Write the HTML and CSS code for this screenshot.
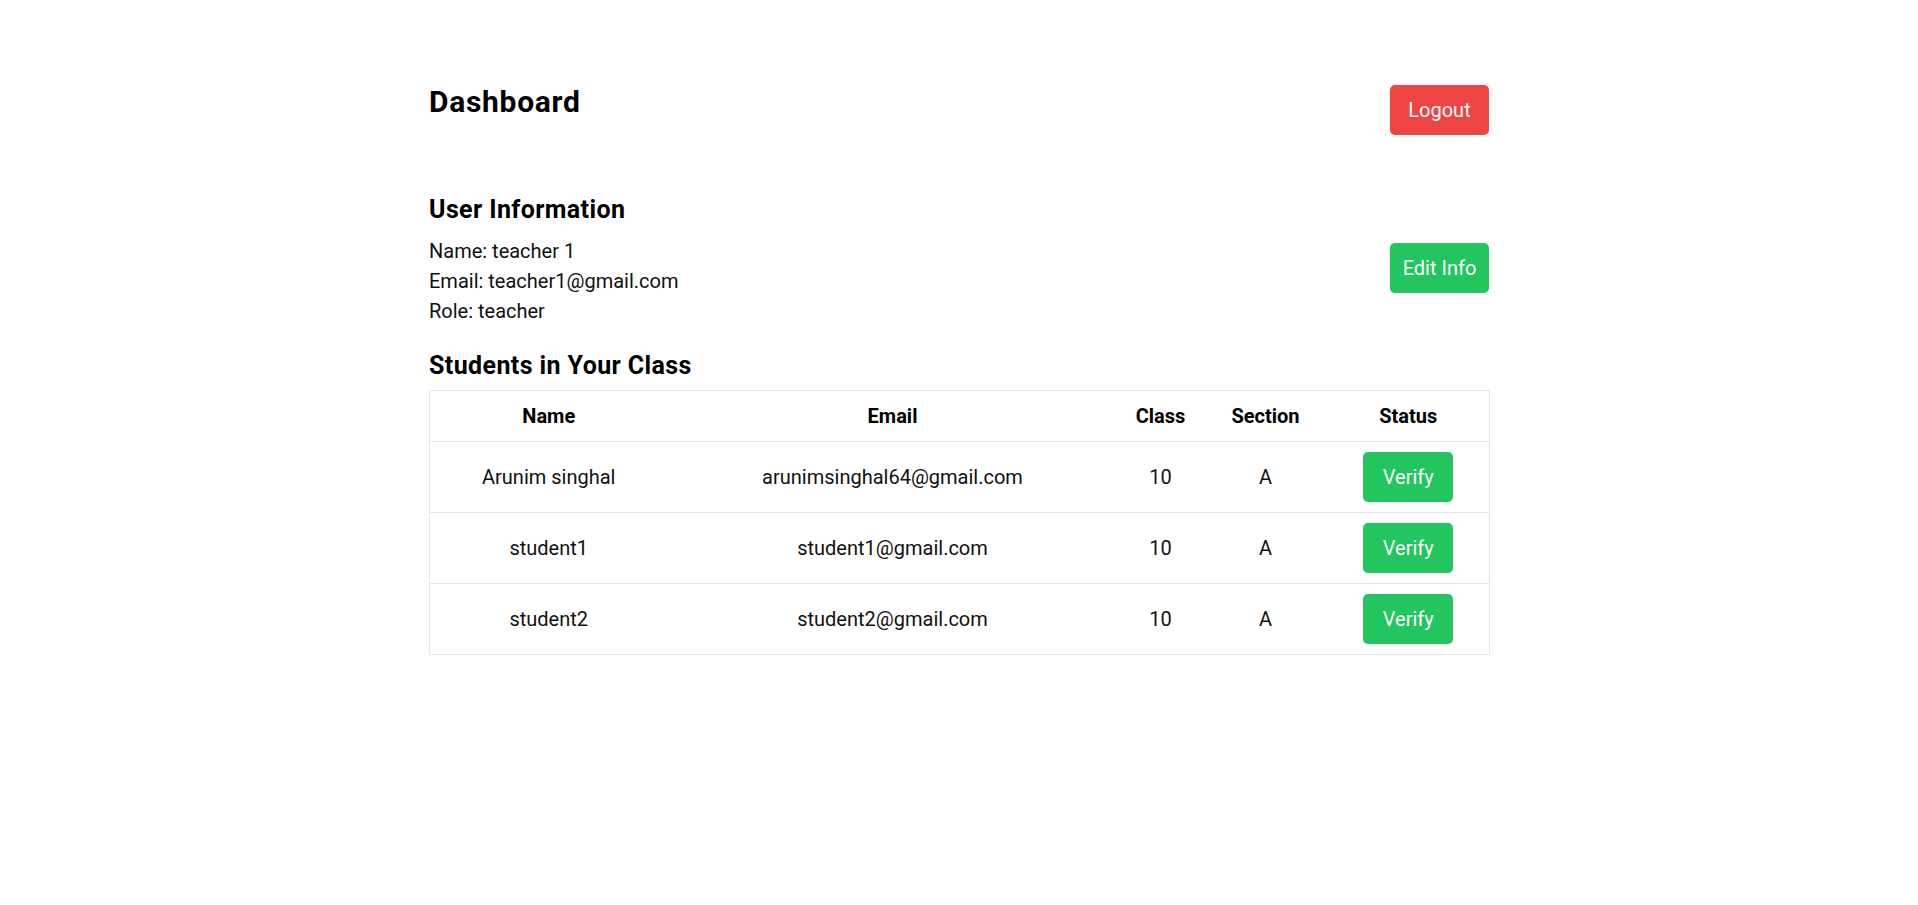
FILE: index.html
```html
<!DOCTYPE html>
<html lang="en">
<head>
<meta charset="utf-8">
<title>Dashboard</title>
<link rel="stylesheet" href="styles.css">
</head>
<body>
<main class="page">
  <header class="top">
    <h1 class="title">Dashboard</h1>
    <button class="btn btn-red btn-wide">Logout</button>
  </header>

  <section class="info">
    <h2 class="section-title">User Information</h2>
    <div class="info-row">
      <div class="info-lines">
        <p>Name: teacher 1</p>
        <p>Email: teacher1@gmail.com</p>
        <p>Role: teacher</p>
      </div>
      <button class="btn btn-green btn-wide btn-edit">Edit Info</button>
    </div>
  </section>

  <section class="students">
    <h2 class="section-title title-tight">Students in Your Class</h2>
    <table class="grid">
      <colgroup>
        <col class="c-name">
        <col class="c-email">
        <col class="c-class">
        <col class="c-section">
        <col class="c-status">
      </colgroup>
      <thead>
        <tr>
          <th>Name</th>
          <th>Email</th>
          <th>Class</th>
          <th>Section</th>
          <th>Status</th>
        </tr>
      </thead>
      <tbody>
        <tr>
          <td>Arunim singhal</td>
          <td>arunimsinghal64@gmail.com</td>
          <td>10</td>
          <td>A</td>
          <td><button class="btn btn-green btn-verify">Verify</button></td>
        </tr>
        <tr>
          <td>student1</td>
          <td>student1@gmail.com</td>
          <td>10</td>
          <td>A</td>
          <td><button class="btn btn-green btn-verify">Verify</button></td>
        </tr>
        <tr>
          <td>student2</td>
          <td>student2@gmail.com</td>
          <td>10</td>
          <td>A</td>
          <td><button class="btn btn-green btn-verify">Verify</button></td>
        </tr>
      </tbody>
    </table>
  </section>
</main>
</body>
</html>
```

FILE: styles.css
```css
* {
  box-sizing: border-box;
}

html, body {
  margin: 0;
  background: #ffffff;
}

body {
  font-family: Roboto, "Open Sans", "Liberation Sans", sans-serif;
  color: #111111;
  font-size: 20px;
  line-height: 30px;
}

.page {
  width: 1060px;
  margin: 0 auto;
  padding-top: 82px;
}

.top {
  display: flex;
  justify-content: space-between;
  align-items: center;
}

.title {
  margin: 0 0 16px;
  font-size: 30px;
  line-height: 40px;
  font-weight: 700;
  letter-spacing: 0.7px;
  color: #000;
}

.btn {
  border: none;
  border-radius: 5px;
  font-family: inherit;
  font-size: 20px;
  line-height: 30px;
  color: #ffffff;
  padding: 10px 0;
  text-align: center;
  cursor: pointer;
}

.btn-wide {
  width: 99px;
}

.btn-red {
  background: #ef4444;
}

.btn-green {
  background: #22c55e;
}

.info {
  margin-top: 54px;
}

.section-title {
  margin: 0 0 9px;
  font-size: 25px;
  line-height: 35px;
  font-weight: 700;
  letter-spacing: 0.4px;
  color: #000;
}

.title-tight {
  margin-bottom: 7px;
}

.info-row {
  display: flex;
  justify-content: space-between;
  align-items: flex-start;
}

.info-lines p {
  margin: 0;
  line-height: 30px;
}

.btn-edit {
  margin-top: 7px;
}

.students {
  margin-top: 22px;
}

.grid {
  width: 1060px;
  border-collapse: collapse;
  table-layout: fixed;
  border: 1px solid #e5e7eb;
}

.c-name { width: 238px; }
.c-email { width: 450px; }
.c-class { width: 86px; }
.c-section { width: 124px; }
.c-status { width: 162px; }

.grid th {
  padding: 10px 0;
  font-weight: 700;
  text-align: center;
  line-height: 30px;
  color: #000;
  border-bottom: 1px solid #e5e7eb;
}

.grid td {
  padding: 10px 0;
  text-align: center;
  vertical-align: middle;
  line-height: 30px;
  border-bottom: 1px solid #e5e7eb;
}

.btn-verify {
  width: 90px;
  display: inline-block;
  vertical-align: middle;
}
```
